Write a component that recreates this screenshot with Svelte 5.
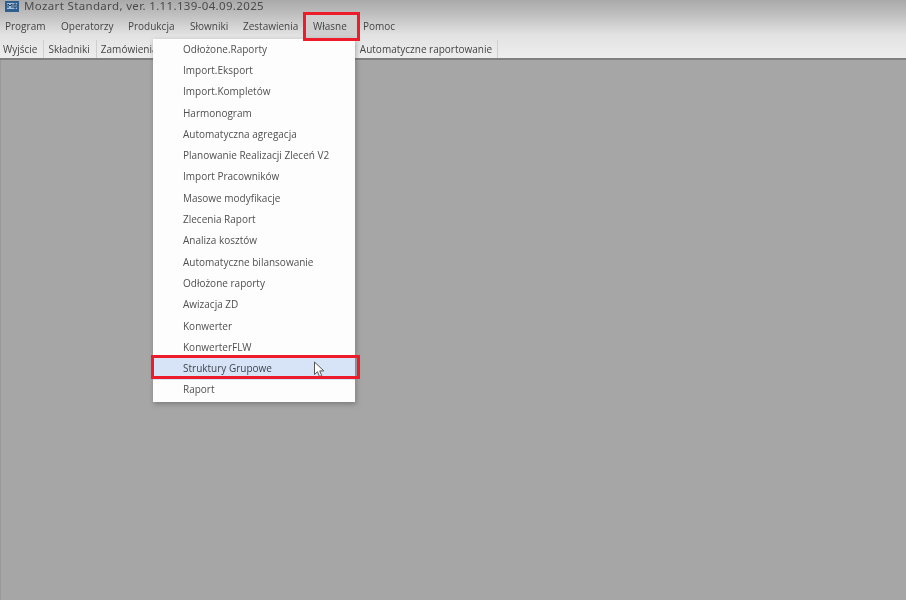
<script>
	const menus = [
		{ label: 'Program', width: 56 },
		{ label: 'Operatorzy', width: 67 },
		{ label: 'Produkcja', width: 62 },
		{ label: 'Słowniki', width: 53 },
		{ label: 'Zestawienia', width: 66 },
		{ label: 'Własne', width: 54, open: true },
		{ label: 'Pomoc', width: 50 }
	];
	const items = [
		'Odłożone.Raporty',
		'Import.Eksport',
		'Import.Kompletów',
		'Harmonogram',
		'Automatyczna agregacja',
		'Planowanie Realizacji Zleceń V2',
		'Import Pracowników',
		'Masowe modyfikacje',
		'Zlecenia Raport',
		'Analiza kosztów',
		'Automatyczne bilansowanie',
		'Odłożone raporty',
		'Awizacja ZD',
		'Konwerter',
		'KonwerterFLW',
		'Struktury Grupowe',
		'Raport'
	];
</script>

<div class="window">
	<header>
		<div class="title">
			<svg width="14" height="11" viewBox="0 0 14 11">
				<rect width="14" height="11" fill="#2f5f8f" />
				<rect x="2" y="2" width="10" height="6" fill="#9fc0de" />
				<path d="M3 7V3l2 2 2-2v4M9 3h2v4H9z" fill="none" stroke="#173a5e" />
			</svg>
			<span>Mozart Standard, ver. 1.11.139-04.09.2025</span>
		</div>
		<nav class="menubar">
			{#each menus as menu}
				<div class="menu" class:open={menu.open} style="width: {menu.width}px">{menu.label}</div>
			{/each}
		</nav>
		<div class="toolbar">
			<div class="tool">Wyjście</div>
			<div class="tool">Składniki</div>
			<div class="tool covered">Zamówienia</div>
			<div class="tool last">Automatyczne raportowanie</div>
		</div>
	</header>

	<main></main>

	<div class="dropdown">
		{#each items as item}
			<div class="item" class:hover={item === 'Struktury Grupowe'}>
				{item}
				{#if item === 'Struktury Grupowe'}
					<svg class="cursor" width="13" height="17" viewBox="0 0 13 17">
						<path d="M1.5 1v12.5l3-2.8 2 4.8 2.2-1-2-4.6h4.1z" fill="#fff" stroke="#555" stroke-width="1" />
					</svg>
				{/if}
			</div>
		{/each}
	</div>
	<div class="mark mark-menu"></div>
	<div class="mark mark-item"></div>
</div>

<style>
	:global(body) {
		margin: 0;
		background: #a6a6a6;
	}
	.window {
		position: relative;
		display: flex;
		flex-direction: column;
		width: 906px;
		height: 600px;
		overflow: hidden;
		font-family: 'Open Sans', 'Noto Sans', sans-serif;
		font-size: 10px;
		color: #444;
		filter: blur(0.35px);
	}
	header {
		flex: none;
		height: 58px;
		background: linear-gradient(#a9a9a9, #c4c4c4 30%, #e2e2e2 60%, #eeeeee);
		border-bottom: 2px solid #808080;
		box-sizing: content-box;
	}
	.title {
		display: flex;
		align-items: center;
		gap: 5px;
		height: 12px;
		padding-left: 5px;
		font-family: 'Noto Sans', sans-serif;
		font-size: 11.5px;
		line-height: 12px;
		letter-spacing: 0.35px;
		color: #4a4a4a;
	}
	.menubar {
		display: flex;
		height: 28px;
		box-sizing: border-box;
	}
	.menu {
		display: flex;
		align-items: center;
		padding-left: 5px;
		box-sizing: border-box;
		white-space: nowrap;
	}
	.menu.open {
		padding-left: 9px;
		background: #cfcfcf;
	}
	.toolbar {
		display: flex;
		height: 18px;
	}
	.tool {
		display: flex;
		align-items: center;
		padding: 0 6px 0 3px;
		border-right: 1px solid #cfcfcf;
		white-space: nowrap;
	}
	.tool + .tool {
		padding-left: 4px;
	}
	.covered {
		width: 60px;
		flex: none;
		box-sizing: border-box;
	}
	.last {
		margin-left: 199px;
		padding-right: 5px;
	}
	main {
		flex: 1;
		background: #a6a6a6;
		border-left: 1px solid #999;
	}
	.dropdown {
		position: absolute;
		left: 153px;
		top: 39px;
		width: 202px;
		height: 363px;
		box-sizing: border-box;
		background: #fdfdfd;
		box-shadow: 1px 2px 5px rgba(60, 60, 60, 0.4);
		display: flex;
		flex-direction: column;
	}
	.item {
		position: relative;
		display: flex;
		align-items: center;
		flex: none;
		height: 21.3px;
		padding: 0 0 2px 30px;
		box-sizing: border-box;
		white-space: nowrap;
		color: #505050;
	}
	.item.hover {
		background: #d7e3f6;
		color: #3f4650;
	}
	.cursor {
		position: absolute;
		left: 160px;
		top: 3px;
	}
	.mark {
		position: absolute;
		box-sizing: border-box;
		border: 3px solid #ed1c2a;
	}
	.mark-menu {
		left: 303px;
		top: 12px;
		width: 57px;
		height: 29px;
	}
	.mark-item {
		left: 151px;
		top: 355px;
		width: 209px;
		height: 24px;
	}
</style>
